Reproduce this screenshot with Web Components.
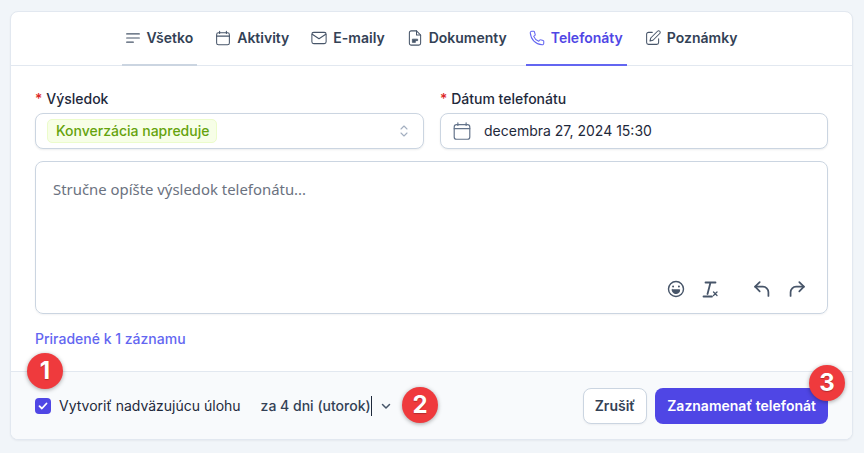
<!DOCTYPE html>
<html lang="sk"><head><meta charset="utf-8"><title>Telefonát</title>
<style>
html,body{margin:0;padding:0;background:#f1f5f9;height:453px;overflow:hidden}
body{font-family:Inter,"Noto Sans",sans-serif;color:#1e293b;position:relative}
</style></head><body>
<call-card>
  <tab-bar slot="tabs"></tab-bar>
  <call-form slot="form"></call-form>
  <call-footer slot="footer"></call-footer>
</call-card>
<step-badge n="1" style="left:27px;top:353px"></step-badge>
<step-badge n="2" style="left:402px;top:387px"></step-badge>
<step-badge n="3" style="left:809px;top:365px"></step-badge>
<script>
const S=(inner,size=16,sw=1.5)=>`<svg width="${size}" height="${size}" viewBox="0 0 24 24" fill="none" stroke="currentColor" stroke-width="${sw}" stroke-linecap="round" stroke-linejoin="round">${inner}</svg>`;
const cal='<rect x="3.5" y="5" width="17" height="16" rx="2.5"/><path d="M3.5 9.5h17M7.5 3v3M16.5 3v3"/>';
const icons={
 all:'<path d="M3.5 6.5h17M3.5 12h17M3.5 17.5h9"/>',
 cal,
 mail:'<rect x="2.5" y="4.5" width="19" height="15" rx="2.5"/><path d="M3 7l9 6 9-6"/>',
 doc:'<path d="M14 2.5H7A2.5 2.5 0 0 0 4.5 5v14A2.5 2.5 0 0 0 7 21.5h10a2.5 2.5 0 0 0 2.5-2.5V8z"/><path d="M14 2.5V8h5.5"/><path d="M8.5 17.5v-4h7v2h-3v2z" fill="currentColor" stroke-width="1"/>',
 phone:'<path d="M5 3h2.6c.5 0 .9.3 1 .8l1 3.6c.1.4 0 .8-.3 1L7.6 9.8c1.2 3 3.6 5.4 6.6 6.6l1.4-1.7c.3-.3.7-.4 1-.3l3.6 1c.5.1.8.5.8 1V19c0 1.2-1 2.2-2.2 2C10 20.2 3.8 14 3 5.2 2.9 4 3.8 3 5 3z"/>',
 note:'<path d="M11 4.5H6A2.5 2.5 0 0 0 3.5 7v11A2.5 2.5 0 0 0 6 20.5h11a2.5 2.5 0 0 0 2.5-2.5v-5"/><path d="M18 3a2.1 2.1 0 0 1 3 3l-9 9-4 1 1-4z"/>'
};
const def=(n,fn)=>customElements.define(n,class extends HTMLElement{constructor(){super();this.attachShadow({mode:'open'}).innerHTML=fn(this)}});

def('call-card',()=>`<style>
:host{display:flex;flex-direction:column;box-sizing:border-box;width:843px;height:429px;margin:11px 0 0 10px;background:#fff;border:1px solid #e2e8f0;border-radius:8px;overflow:hidden;box-shadow:0 1px 2px rgba(15,23,42,.05)}
</style><slot name="tabs"></slot><slot name="form"></slot><slot name="footer"></slot>`);

def('tab-item',el=>{const a=el.hasAttribute('active'),m=el.hasAttribute('muted');return `<style>
:host{display:block}
.t{box-sizing:border-box;height:54px;padding:0 4px;display:flex;align-items:center;gap:5px;font:600 14px/20px Inter,sans-serif;color:${a?'#4f46e5':'#334155'};border-bottom:2px solid ${a?'#6366f1':(m?'#cbd5e1':'transparent')};margin-bottom:-1px}
svg{color:${a?'#6366f1':'#475569'};flex:none;margin:0 0 0 -2px}
</style><div class="t">${S(icons[el.getAttribute('icon')],18,1.4)}<slot></slot></div>`});

def('tab-bar',()=>`<style>
:host{display:flex;flex:none;justify-content:center;gap:15px;height:54px;border-bottom:1px solid #e2e8f0;box-sizing:border-box}
</style>
<tab-item icon="all" muted>Všetko</tab-item>
<tab-item icon="cal">Aktivity</tab-item>
<tab-item icon="mail">E-maily</tab-item>
<tab-item icon="doc">Dokumenty</tab-item>
<tab-item icon="phone" active>Telefonáty</tab-item>
<tab-item icon="note">Poznámky</tab-item>`);

def('form-field',el=>`<style>
:host{display:block;min-width:0}
label{display:block;font:500 14px/20px Inter,sans-serif;color:#1e293b;margin-bottom:4px}
i{font-style:normal;color:#dc2626;margin-right:.2px}
</style><label><i>*</i> ${el.getAttribute('label')}</label><slot></slot>`);

def('field-box',()=>`<style>
:host{display:flex;align-items:center;box-sizing:border-box;height:36px;background:#fff;border:1px solid #cbd5e1;border-radius:8px;box-shadow:0 1px 2px rgba(15,23,42,.08);padding:0 13px 0 11px;font:400 14px/20px Inter,sans-serif;color:#1e293b}
</style><slot></slot>`);

def('status-tag',()=>`<style>
:host{display:inline-block;box-sizing:border-box;height:24px;padding:0 7px 0 8px;background:#f7fee7;border:1px solid #ecfccb;border-radius:5px;font:500 14px/22px Inter,sans-serif;color:#65a30d;white-space:nowrap}
</style><slot></slot>`);

def('call-form',()=>`<style>
:host{display:block;flex:1;padding:23px 24px 0 24px;box-sizing:border-box}
.row{display:grid;grid-template-columns:389px 388px;gap:16px}
.sp{margin-left:auto;color:#a3afc0;display:flex;margin-right:2px}
.cal{color:#64748b;display:flex;margin:0 11px 0 -1px}
.ed{box-sizing:border-box;height:153px;margin-top:12px;border:1px solid #cbd5e1;border-radius:8px;padding:17px 16px 14px 17px;display:flex;flex-direction:column;justify-content:space-between;box-shadow:0 1px 2px rgba(15,23,42,.05);font:400 14.9px/20px "Noto Sans",sans-serif;color:#6b7280}
.tools{display:flex;justify-content:flex-end;align-items:center;color:#475569;height:22px;margin-bottom:-1px}
.tools span{display:flex}
a{display:block;margin-top:15px;font:500 14px/20px Inter,sans-serif;color:#6366f1;text-decoration:none}
</style>
<div class="row">
<form-field label="Výsledok"><field-box><status-tag>Konverzácia napreduje</status-tag><span class="sp"><svg width="8" height="12" viewBox="0 0 8 12" fill="none" stroke="currentColor" stroke-width="1.1" stroke-linecap="round" stroke-linejoin="round"><path d="M1 4l3-3 3 3M1 8l3 3 3-3"/></svg></span></field-box></form-field>
<form-field label="Dátum telefonátu"><field-box><span class="cal">${S(cal,22,1.3)}</span>decembra 27, 2024 15:30</field-box></form-field>
</div>
<div class="ed"><div>Stručne opíšte výsledok telefonátu...</div>
<div class="tools">
<span style="margin-right:16px">${S('<circle cx="12" cy="12" r="9"/><path d="M7.5 13h9a4.5 4.5 0 0 1-9 0z" fill="currentColor" stroke-width="1.2"/><path d="M8.5 9h.01M15.5 9h.01" stroke-width="2.4"/>',20,1.7)}</span>
<span style="margin-right:32px"><svg width="17" height="18" viewBox="0 0 17 18" fill="none" stroke="currentColor" stroke-linecap="round"><path d="M3.5 2.5h10M8.5 2.5L5.5 14" stroke-width="1.8"/><path d="M1.5 16.5h8.5" stroke-width="1.8"/><path d="M11.5 12l3.5 3.5M15 12l-3.5 3.5" stroke-width="1.3"/></svg></span>
<span style="margin-right:13px">${S('<path d="M9.5 4.5L4.5 9.5l5 5"/><path d="M4.5 9.5H13a6 6 0 0 1 6 6v4"/>',22,1.9)}</span>
<span style="margin-right:3px">${S('<path d="M14.5 4.5l5 5-5 5"/><path d="M19.5 9.5H11a6 6 0 0 0-6 6v4"/>',22,1.9)}</span>
</div></div>
<a>Priradené k 1 záznamu</a>`);

def('check-box',()=>`<style>
:host{display:flex;align-items:center;justify-content:center;flex:none;width:16px;height:16px;background:#4f46e5;border-radius:4px}
</style><svg width="10" height="10" viewBox="0 0 10 10" fill="none" stroke="#fff" stroke-width="1.8" stroke-linecap="round" stroke-linejoin="round"><path d="M1.5 5.2l2.4 2.3 4.6-5"/></svg>`);

def('action-btn',el=>{const p=el.hasAttribute('primary');return `<style>
:host{display:flex;align-items:center;justify-content:center;box-sizing:border-box;height:36px;border-radius:8px;padding:0 ${p?12:11}px;font:600 14px/20px Inter,sans-serif;white-space:nowrap;${p?'background:#4f46e5;color:#fff':'background:#fff;color:#334155;border:1px solid #cbd5e1;box-shadow:0 1px 2px rgba(15,23,42,.05)'}}
</style><slot></slot>`});

def('call-footer',()=>`<style>
:host{display:flex;flex:none;align-items:center;box-sizing:border-box;height:68px;padding:0 24px;background:#f8fafc;border-top:1px solid #e2e8f0;font:400 14px/20px Inter,sans-serif;color:#1e293b}
.l{margin-left:8px}
.due{margin-left:20px;font-weight:500;color:#334155;white-space:nowrap;border-right:1.5px solid #1e293b;line-height:20px}
.ch{margin-left:8px;display:flex;color:#475569}
.r{margin-left:auto;display:flex;gap:8px}
</style>
<check-box></check-box><span class="l">Vytvoriť nadväzujúcu úlohu</span>
<span class="due">za 4 dni (utorok)</span>
<span class="ch"><svg width="12" height="12" viewBox="0 0 12 12" fill="none" stroke="currentColor" stroke-width="1.5" stroke-linecap="round" stroke-linejoin="round"><path d="M2.5 4.5L6 8l3.5-3.5"/></svg></span>
<div class="r"><action-btn>Zrušiť</action-btn><action-btn primary>Zaznamenať telefonát</action-btn></div>`);

def('step-badge',el=>`<style>
:host{position:absolute;display:flex;align-items:center;justify-content:center;width:36px;height:36px;border-radius:50%;background:#ef3a3d;color:#fff;font:700 24px/36px Inter,sans-serif;box-shadow:0 1px 4px rgba(0,0,0,.35);text-shadow:0 1px 1px rgba(0,0,0,.25)}
</style>${el.getAttribute('n')}`);
</script>
</body></html>
